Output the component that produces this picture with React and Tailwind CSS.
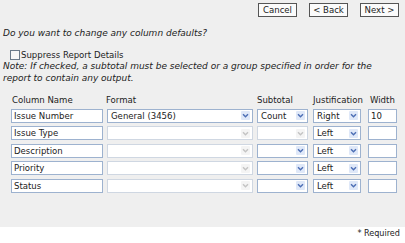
import React from "react";

const font = { fontFamily: '"DejaVu Sans Condensed", "DejaVu Sans", Verdana, sans-serif' };
const ital = { fontFamily: '"DejaVu Sans", Verdana, sans-serif' };

function Chevron({ disabled }) {
  return (
    <svg width="9" height="9" viewBox="0 0 9 9" className="shrink-0">
      <rect x="0" y="0" width="9" height="9" rx="1" fill={disabled ? "#f4f4f4" : "#dfe8f8"} />
      <path d="M2 3.2 L4.5 5.8 L7 3.2" fill="none" stroke={disabled ? "#c4c4c4" : "#4d6fb5"} strokeWidth="1.4" />
    </svg>
  );
}

function TextBox({ w, value }) {
  return (
    <div className={`${w} h-[14px] bg-white border border-[#9db2cf] flex items-center px-[2px] text-[9.5px] leading-none text-[#222]`}>
      {value}
    </div>
  );
}

function Select({ w, value, disabled }) {
  return (
    <div className={`${w} h-[14px] bg-white border ${disabled ? "border-[#cfd7e2]" : "border-[#9db2cf]"} flex items-center justify-between pl-[3px] pr-[2px] text-[9.5px] leading-none text-[#222]`}>
      <span>{value}</span>
      <Chevron disabled={disabled} />
    </div>
  );
}

const rows = [
  { name: "Issue Number", format: "General (3456)", fdis: false, sub: "Count", sdis: false, just: "Right", width: "10" },
  { name: "Issue Type", format: "", fdis: true, sub: "", sdis: true, just: "Left", width: "" },
  { name: "Description", format: "", fdis: true, sub: "", sdis: false, just: "Left", width: "" },
  { name: "Priority", format: "", fdis: true, sub: "", sdis: false, just: "Left", width: "" },
  { name: "Status", format: "", fdis: true, sub: "", sdis: false, just: "Left", width: "" },
];

function Btn({ children }) {
  return (
    <div className="h-[14px] w-[39px] border border-[#555] bg-[#fbfbfb] flex items-center justify-center text-[9.5px] leading-none text-[#222]">
      {children}
    </div>
  );
}

export default function App() {
  return (
    <div className="w-[405px] h-[243px] bg-white overflow-hidden" style={font}>
      <div className="h-[227px] bg-[#efefef] flex flex-col">
        <div className="flex justify-end gap-[12px] pt-[3px] pr-[6px]">
          <Btn>Cancel</Btn>
          <Btn>&lt; Back</Btn>
          <Btn>Next &gt;</Btn>
        </div>
        <div className="mt-[12px] ml-[3px] text-[9px] italic leading-none text-[#222]" style={ital}>
          Do you want to change any column defaults?
        </div>
        <div className="mt-[12px] ml-[10px] flex items-center gap-[1px] text-[9.5px] leading-none text-[#222]">
          <div className="w-[10px] h-[10px] border border-[#6b7a8a] bg-[#f7f7f7]" />
          <span>Suppress Report Details</span>
        </div>
        <div className="mt-0 ml-[3px] text-[9px] italic leading-[12px] text-[#222] whitespace-nowrap" style={ital}>
          Note: If checked, a subtotal must be selected or a group specified in order for the
          <br />
          report to contain any output.
        </div>
        <div className="mt-[11px] flex text-[9.5px] leading-none text-[#222]">
          <div className="ml-[12px] w-[94px]">Column Name</div>
          <div className="w-[151px]">Format</div>
          <div className="w-[56px]">Subtotal</div>
          <div className="w-[57px] whitespace-nowrap">Justification</div>
          <div>Width</div>
        </div>
        <div className="mt-[4px] flex flex-col gap-[3.5px]">
          {rows.map((r) => (
            <div key={r.name} className="flex ml-[11px]">
              <TextBox w="w-[92px]" value={r.name} />
              <div className="w-[4px]" />
              <Select w="w-[146px]" value={r.format} disabled={r.fdis} />
              <div className="w-[4px]" />
              <Select w="w-[51px]" value={r.sub} disabled={r.sdis} />
              <div className="w-[5px]" />
              <Select w="w-[48px]" value={r.just} />
              <div className="w-[7px]" />
              <TextBox w="w-[29px]" value={r.width} />
            </div>
          ))}
        </div>
      </div>
      <div className="flex justify-end pr-[5px] pt-[2px] text-[9px] leading-none text-[#222]">* Required</div>
    </div>
  );
}
